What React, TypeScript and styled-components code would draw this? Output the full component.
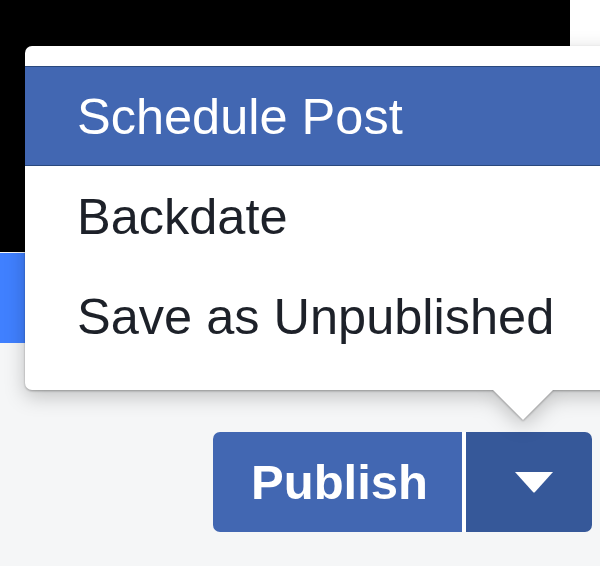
import styled, { createGlobalStyle } from 'styled-components'

const GlobalStyle = createGlobalStyle`
  html, body {
    margin: 0;
    padding: 0;
    background: #f5f6f7;
  }
  body {
    font-family: "Liberation Sans", Arial, Helvetica, sans-serif;
  }
`

const Page = styled.div`
  position: relative;
  width: 600px;
  height: 566px;
  overflow: hidden;
  background: #f5f6f7;
`

const Hero = styled.div`
  display: flex;
  background: #fff;
`

const Media = styled.div`
  width: 570px;
  height: 252px;
  background: #000;
`

const Banner = styled.div`
  width: 570px;
  height: 90px;
  margin-top: 1px;
  background: #4080ff;
`

const Footer = styled.div`
  display: flex;
  justify-content: flex-end;
  padding: 89px 8px 0 0;
`

const ButtonGroup = styled.div`
  display: flex;
  gap: 4px;
  height: 100px;
  background: #fff;
  border-radius: 7px;
  overflow: hidden;
`

const Button = styled.button<{ $dark?: boolean }>`
  display: flex;
  align-items: center;
  justify-content: center;
  border: 0;
  margin: 0;
  padding: ${(p) => (p.$dark ? '0 0 0 10px' : '0 0 0 4px')};
  box-sizing: border-box;
  width: ${(p) => (p.$dark ? '126px' : '249px')};
  height: 100%;
  background: ${(p) => (p.$dark ? '#365899' : '#4267b2')};
  color: #fff;
  font-family: "Liberation Sans", Arial, Helvetica, sans-serif;
  font-size: 49px;
  font-weight: bold;
  cursor: pointer;
`

// popover + caret, shadow is shared through drop-shadow
const Popover = styled.div`
  position: absolute;
  left: 25px;
  top: 46px;
  width: 600px;
  filter: drop-shadow(0 1px 1px rgba(0, 0, 0, 0.3))
    drop-shadow(0 6px 10px rgba(0, 0, 0, 0.22));
`

const Menu = styled.ul`
  list-style: none;
  margin: 0;
  padding: 20px 0 24px;
  background: #fff;
  border-radius: 7px 0 0 7px;
`

const Item = styled.li<{ $active?: boolean }>`
  display: flex;
  align-items: center;
  box-sizing: border-box;
  height: 100px;
  padding-left: 52px;
  font-size: 50.5px;
  color: ${(p) => (p.$active ? '#fff' : '#1d2129')};
  background: ${(p) => (p.$active ? '#4267b2' : '#fff')};
  border-top: 1px solid ${(p) => (p.$active ? '#29487d' : 'transparent')};
  border-bottom: 1px solid ${(p) => (p.$active ? '#29487d' : 'transparent')};
  white-space: nowrap;
`

const Caret = styled.div`
  width: 62px;
  height: 31px;
  margin-left: 467px;
  margin-top: -1px;
  background: #fff;
  clip-path: polygon(0 0, 100% 0, 50% 100%);
`

function App() {
  return (
    <Page>
      <GlobalStyle />
      <Hero>
        <Media />
      </Hero>
      <Banner />
      <Footer>
        <ButtonGroup>
          <Button>Publish</Button>
          <Button $dark aria-label="More options">
            <svg width="38" height="21" viewBox="0 0 38 21">
              <path d="M0 0 H38 L20 20 Q19 21 18 20 Z" fill="#fff" />
            </svg>
          </Button>
        </ButtonGroup>
      </Footer>
      <Popover>
        <Menu>
          <Item $active>Schedule Post</Item>
          <Item>Backdate</Item>
          <Item>Save as Unpublished</Item>
        </Menu>
        <Caret />
      </Popover>
    </Page>
  )
}

export default App
